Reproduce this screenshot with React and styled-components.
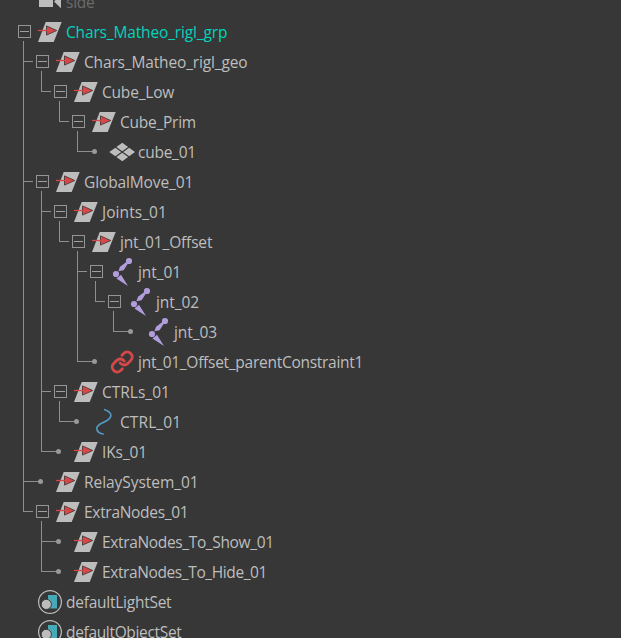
import React from "react";
import styled, { createGlobalStyle, css } from "styled-components";

const GlobalStyle = createGlobalStyle`
  html, body { margin: 0; height: 100%; overflow: hidden; background: #373737; }
`;

const line = "#8f8f8f";

const Outliner = styled.main`
  box-sizing: border-box;
  width: 621px;
  height: 638px;
  overflow: hidden;
  background: #373737;
  font-family: "Open Sans", "Segoe UI", sans-serif;
`;

const Tree = styled.ul`
  list-style: none;
  margin: -13px 0 0;
  padding: 0 0 0 15px;
`;

const Row = styled.li`
  display: flex;
  height: 30px;
`;

const verticals = { through: "8px 0 / 1px 30px", corner: "8px 0 / 1px 15px", tee: "8px 0 / 1px 30px" };

const Guide = styled.span`
  flex: 0 0 18px;
  height: 30px;
  ${({ $kind }) => $kind !== "none" && css`
    background:
      linear-gradient(${line}, ${line}) ${verticals[$kind]} no-repeat
      ${$kind !== "through" && css`, linear-gradient(${line}, ${line}) 8px 14px / 10px 1px no-repeat`};
  `}
`;

const ToggleCell = styled.span`
  display: flex;
  flex: 0 0 18px;
  flex-direction: column;
  box-sizing: border-box;
  height: 30px;
  padding: 8px 2px 0 3px;
  background: linear-gradient(${line}, ${line}) 8px 24px / 1px 6px no-repeat;
`;

const Toggle = styled.span`
  box-sizing: border-box;
  width: 13px;
  height: 13px;
  border: 1px solid #959595;
  background: linear-gradient(#a0a0a0, #a0a0a0) 1px 5px / 9px 1px no-repeat;
`;

const LeafCell = styled.span`
  flex: 0 0 18px;
  box-sizing: border-box;
  height: 30px;
  padding: 12px 0 0 5px;
  background: linear-gradient(${line}, ${line}) 0 14px / 6px 1px no-repeat;
`;

const Dot = styled.span`
  display: block;
  width: 5px;
  height: 5px;
  border-radius: 50%;
  background: #999;
`;

const IconSlot = styled.svg`
  display: block;
  flex: 0 0 33px;
  width: 33px;
  height: 30px;
`;

const Label = styled.span`
  color: ${({ $tone }) => ({ active: "#00d4bc", muted: "#6b6b6b" })[$tone] || "#bebebe"};
  font-size: 15.5px;
  line-height: 30px;
  letter-spacing: ${({ $track }) => $track ?? -0.25}px;
  white-space: pre;
`;

const icons = {
  camera: (
    <g fill="#bdbdbd">
      <path d="M6 9h14v11H6zM21 14.5 28 8v13.3z" />
    </g>
  ),
  transform: (
    <>
      <path d="M12.7 5h16l-8 20H5z" fill="#bdbdbd" />
      <path d="M13.5 8.9 23.7 13.5l-10.2 4.6z" fill="#d64848" stroke="#4a3838" strokeWidth="0.9" strokeLinejoin="round" />
      <path d="M5 13.5h11" stroke="#d64848" strokeWidth="1.3" />
    </>
  ),
  mesh: (
    <>
      <path d="M17.3 5.8 30 15l-12.7 9.2L4.3 15z" fill="#bdbdbd" />
      <path d="m10 9.7 14.5 10.6M24.5 9.7 10 20.3" stroke="#373737" strokeWidth="1.2" />
    </>
  ),
  joint: (
    <g fill="#b19ddb">
      <circle cx="24" cy="4" r="3.1" />
      <circle cx="11" cy="17" r="3.1" />
      <path d="M13.4 14.2 15 9.7 22 4.4l1.3 1.5-4.7 7.3zM11.4 21.4l4.6-3.6 7 11.1z" />
    </g>
  ),
  constraint: (
    <g transform="translate(5.2 3)" fill="none" stroke="#d64848" strokeWidth="2.9" strokeLinecap="round">
      <path d="M10 13a5 5 0 0 0 7.54.54l3-3a5 5 0 0 0-7.07-7.07l-1.72 1.71" />
      <path d="M14 11a5 5 0 0 0-7.54-.54l-3 3a5 5 0 0 0 7.07 7.07l1.71-1.71" />
    </g>
  ),
  curve: (
    <path d="M17 2.4c6.5 1.9 9.5 6.2 4 10.4-4 3-11.2 4.2-11.2 8.4 0 3.2 2.6 5.2 6.9 6" fill="none" stroke="#539dc8" strokeWidth="1.6" />
  ),
  set: (
    <>
      <circle cx="17" cy="15" r="11.4" fill="none" stroke="#bdbdbd" strokeWidth="1.2" />
      <path d="M15 8h9v13.5h-9z" fill="#45a9b8" />
      <circle cx="13.3" cy="17.4" r="5.1" fill="#bdbdbd" stroke="#373737" strokeWidth="1" />
    </>
  ),
};

/* Guide codes per ancestor column: "|" through, "+" tee, "L" corner, "." empty */
const guideKinds = { "|": "through", "+": "tee", L: "corner", ".": "none" };

const nodes = [
  { g: "", end: "none", icon: "camera", name: "side", tone: "muted" },
  { g: "", end: "box", icon: "transform", name: "Chars_Matheo_rigl_grp", tone: "active", track: -0.15 },
  { g: "+", end: "box", icon: "transform", name: "Chars_Matheo_rigl_geo", track: -0.15 },
  { g: "|L", end: "box", icon: "transform", name: "Cube_Low", track: -0.2 },
  { g: "|.L", end: "box", icon: "transform", name: "Cube_Prim" },
  { g: "|..L", end: "dot", icon: "mesh", name: "cube_01" },
  { g: "+", end: "box", icon: "transform", name: "GlobalMove_01", track: -0.12 },
  { g: "|+", end: "box", icon: "transform", name: "Joints_01", track: 0.06 },
  { g: "||L", end: "box", icon: "transform", name: "jnt_01_Offset", track: -0.16 },
  { g: "||.+", end: "box", icon: "joint", name: "jnt_01", track: -0.08 },
  { g: "||.|L", end: "box", icon: "joint", name: "jnt_02", track: -0.08 },
  { g: "||.|.L", end: "dot", icon: "joint", name: "jnt_03", track: -0.08 },
  { g: "||.L", end: "dot", icon: "constraint", name: "jnt_01_Offset_parentConstraint1", track: -0.27 },
  { g: "|+", end: "box", icon: "transform", name: "CTRLs_01", track: 0 },
  { g: "||L", end: "dot", icon: "curve", name: "CTRL_01", track: 0.1 },
  { g: "|L", end: "dot", icon: "transform", name: "IKs_01", track: -0.1 },
  { g: "+", end: "dot", icon: "transform", name: "RelaySystem_01", track: -0.05 },
  { g: "L", end: "box", icon: "transform", name: "ExtraNodes_01", track: -0.3 },
  { g: ".+", end: "dot", icon: "transform", name: "ExtraNodes_To_Show_01", track: -0.35 },
  { g: ".L", end: "dot", icon: "transform", name: "ExtraNodes_To_Hide_01", track: -0.39 },
  { g: "", end: "none", icon: "set", name: "defaultLightSet" },
  { g: "", end: "none", icon: "set", name: "defaultObjectSet", track: -0.33 },
];

function TreeNode({ node }) {
  return (
    <Row>
      {[...node.g].map((c, i) => <Guide key={i} $kind={guideKinds[c]} />)}
      {node.end === "box" && <ToggleCell><Toggle /></ToggleCell>}
      {node.end === "dot" && <LeafCell><Dot /></LeafCell>}
      {node.end === "none" && <Guide $kind="none" />}
      <IconSlot viewBox="0 0 33 30" aria-hidden="true">{icons[node.icon]}</IconSlot>
      <Label $tone={node.tone} $track={node.track}>{node.name}</Label>
    </Row>
  );
}

export default function App() {
  return (
    <>
      <GlobalStyle />
      <Outliner>
        <Tree>{nodes.map((n) => <TreeNode key={n.name} node={n} />)}</Tree>
      </Outliner>
    </>
  );
}
